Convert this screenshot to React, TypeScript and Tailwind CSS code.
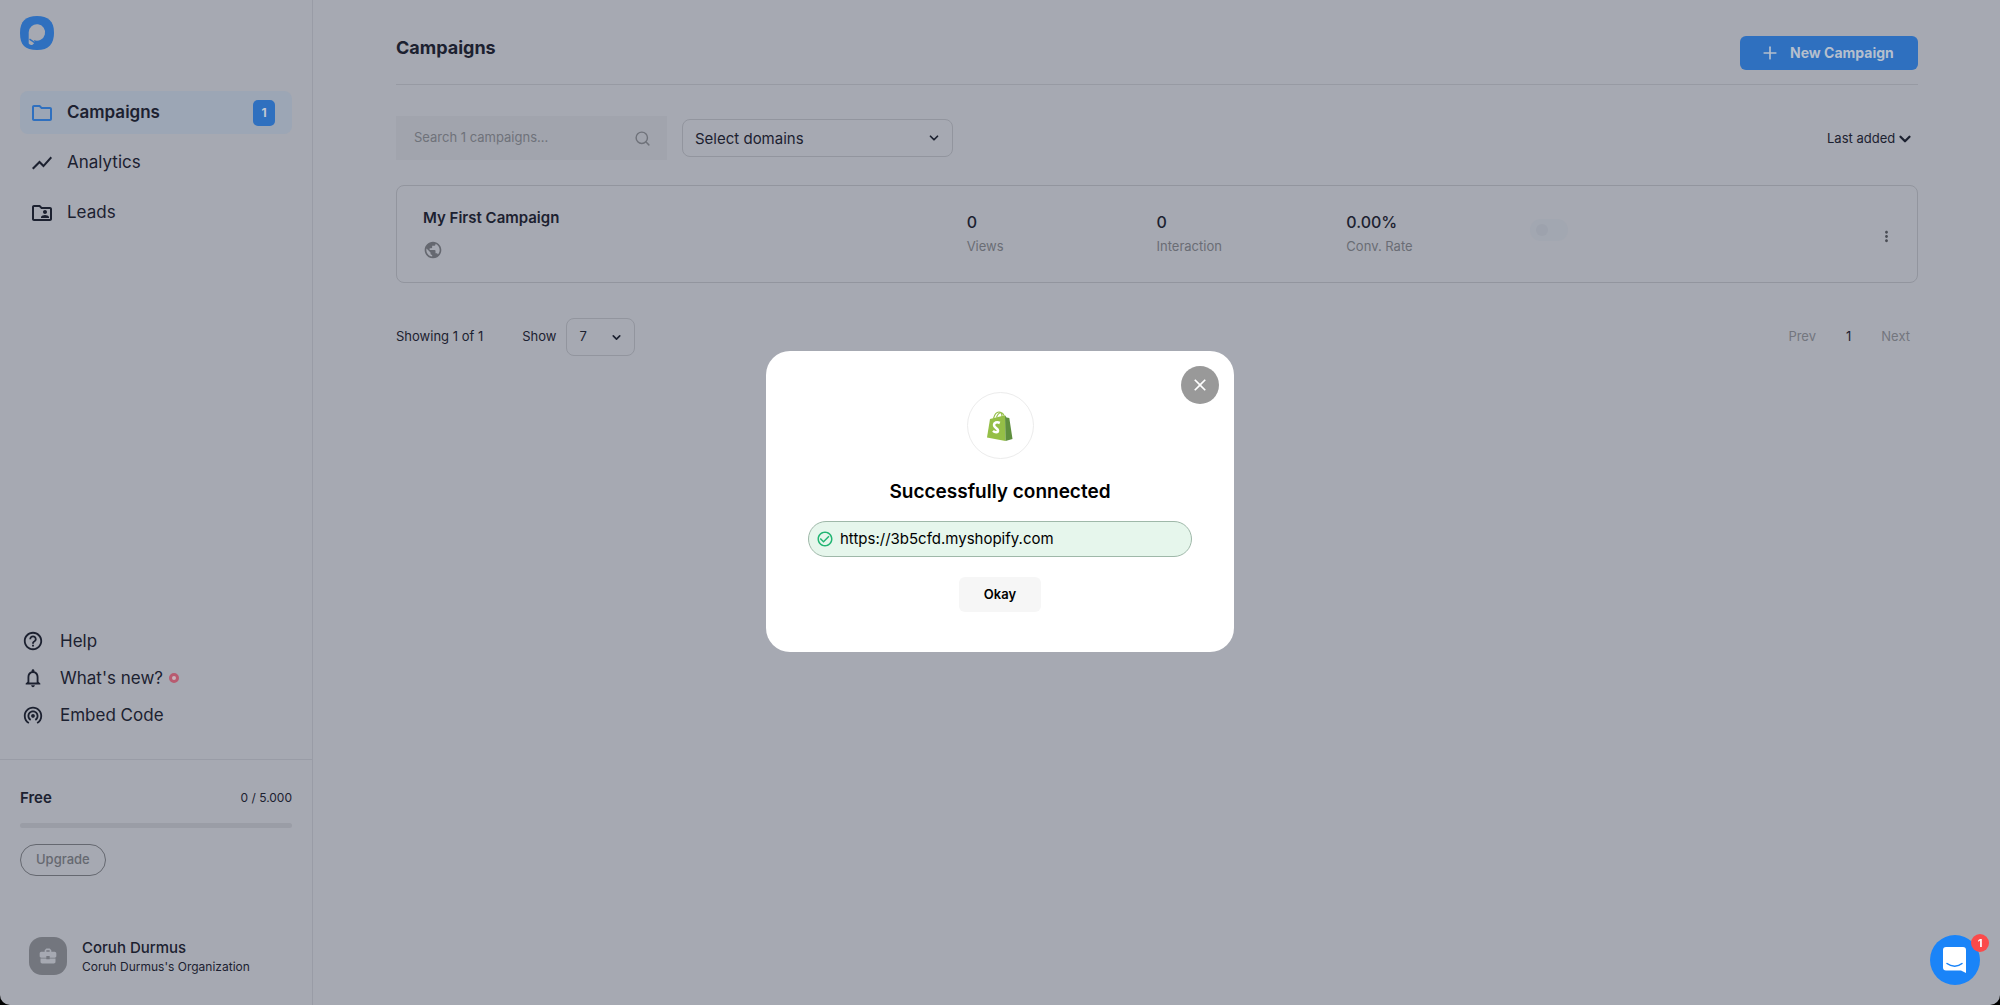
import { useState } from "react";
import type { ReactNode } from "react";
import {
  MdBusinessCenter,
  MdCheckCircleOutline,
  MdClose,
  MdHelpOutline,
  MdMoreVert,
  MdNotificationsNone,
  MdOutlineFolder,
  MdOutlineFolderShared,
  MdPublic,
  MdShowChart,
  MdWifiTethering,
} from "react-icons/md";
import { ChevronDown, Plus, Search } from "lucide-react";

const stats = [
  { label: "Views", value: "0" },
  { label: "Interaction", value: "0" },
  { label: "Conv. Rate", value: "0.00%" },
];

function Logo() {
  return (
    <svg viewBox="0 0 34 34" className="h-[34px] w-[34px]" aria-label="Home">
      <path
        d="M17 0c11 0 17 5 17 16.5S29 34 17 34 0 29 0 17 6 0 17 0z"
        fill="#2f70bf"
      />
      <path
        d="M8.700 16.300a8.200 8.200 0 1 1 5.300 7.800l.8 2.400-2.200 2.300q-2.600.9-3.900-1.200z"
        fill="#a6a9b2"
      />
      <path d="M9.500 23.200l5.500 3.600" stroke="#2f70bf" strokeWidth="1.400" />
    </svg>
  );
}

function ShopifyLogo() {
  return (
    <svg viewBox="0 0 26 30" className="h-[30px] w-[26px]" aria-hidden="true">
      <path d="M3 8l15-3.800L18.500 30 0 26.500z" fill="#95bf47" />
      <path d="M18 4.200l1.500 2.300 2.800.6L25.500 28l-7 2z" fill="#5e8e3e" />
      <path
        d="M6.500 7.500C7.500 3.500 9.500 1 12 1c2 0 3 2 3 4.500M9.500 6.500C10.500 3 12 2 14 1.500c1.800.2 2.500 1.700 3 3"
        fill="none"
        stroke="#95bf47"
        strokeWidth="1.200"
      />
      <path
        d="M12.800 12c-3-1.500-5.800-.3-5.800 2.100 0 3 4 3 4 5.400 0 2.200-3 2.200-5 .4"
        fill="none"
        stroke="#fff"
        strokeWidth="2.600"
      />
    </svg>
  );
}

function NavItem({ icon, label, active, count }: { icon: ReactNode; label: string; active?: boolean; count?: number }) {
  return (
    <a
      href="#"
      className={
        active
          ? "flex h-[43px] items-center rounded-lg bg-[#9ca6b5] pr-[17px] pl-2.5 text-[17px] font-semibold"
          : "flex h-[43px] items-center rounded-lg pr-[17px] pl-2.5 text-[17px]"
      }
    >
      {icon}
      <span className="ml-[13px] flex-1">{label}</span>
      {count && (
        <span className="flex h-[26px] w-[22px] items-center justify-center rounded-[5px] bg-[#2f70bf] text-xs font-bold text-[#c3c9d3]">
          {count}
        </span>
      )}
    </a>
  );
}

function HelpItem({ icon, label, dot }: { icon: ReactNode; label: string; dot?: boolean }) {
  return (
    <a href="#" className="flex items-center text-[17px] leading-6">
      {icon}
      <span className="ml-4">{label}</span>
      {dot && <span className="ml-1.5 h-2.5 w-2.5 rounded-full border-[3px] border-[#b85b70] bg-[#c9b3bb]" />}
    </a>
  );
}

function Sidebar() {
  return (
    <aside className="flex w-[313px] shrink-0 flex-col border-r border-[#999ca6]">
      <div className="px-5 pt-4">
        <Logo />
        <nav className="mt-[41px] flex flex-col gap-[7px]">
          <NavItem icon={<MdOutlineFolder size={24} color="#2f70bf" />} label="Campaigns" active count={1} />
          <NavItem icon={<MdShowChart size={24} />} label="Analytics" />
          <NavItem icon={<MdOutlineFolderShared size={24} />} label="Leads" />
        </nav>
      </div>

      <div className="mt-auto flex flex-col gap-[13px] px-[22px] pb-8">
        <HelpItem icon={<MdHelpOutline size={22} />} label="Help" />
        <HelpItem icon={<MdNotificationsNone size={22} />} label="What's new?" dot />
        <HelpItem icon={<MdWifiTethering size={22} />} label="Embed Code" />
      </div>

      <div className="border-t border-[#999ca6] px-5 pt-7 pb-[29px]">
        <div className="flex items-center justify-between">
          <span className="text-[15px] leading-5 font-semibold">Free</span>
          <span className="text-xs">0 / 5.000</span>
        </div>
        <div className="mt-[15px] h-[5px] rounded-sm bg-[#9a9da6]" />
        <button className="mt-4 h-8 rounded-full border border-[#656870] px-[15px] text-[13px] font-medium text-[#656870]">
          Upgrade
        </button>
        <div className="mt-[60px] flex items-center gap-[15px] pl-[9px]">
          <div className="flex h-[38px] w-[38px] items-center justify-center rounded-[13px] bg-[#73767e] text-[#a6a9b2]">
            <MdBusinessCenter size={20} />
          </div>
          <div className="pt-0.5">
            <p className="text-[15px] leading-5 font-medium">Coruh Durmus</p>
            <p className="text-xs leading-[18px]">Coruh Durmus's Organization</p>
          </div>
        </div>
      </div>
    </aside>
  );
}

function CampaignCard() {
  return (
    <article className="mt-[25px] grid h-[98px] grid-cols-[544fr_190fr_190fr_190fr_355fr] rounded-lg border border-[#92959e] px-[26px]">
      <div className="pt-[22px]">
        <h2 className="text-[15px] leading-5 font-semibold">My First Campaign</h2>
        <MdPublic size={20} color="#656870" className="mt-3" />
      </div>
      {stats.map((stat) => (
        <div key={stat.label} className="pt-6">
          <p className="text-base leading-6 font-medium">{stat.value}</p>
          <p className="mt-0.5 text-[13px] leading-5 text-[#6a6d75]">{stat.label}</p>
        </div>
      ))}
      <div className="flex items-center justify-between">
        <input
          type="checkbox"
          role="switch"
          aria-label="Campaign active"
          className="mb-2 -ml-1.5 flex h-[22px] w-[38px] appearance-none items-center rounded-full bg-[#a2a7b1] pl-1.5 before:h-3 before:w-3 before:rounded-full before:bg-[#9da2ad]"
        />
        <button aria-label="More" className="-mr-1 pt-1 text-[#4a4d55]">
          <MdMoreVert size={17} />
        </button>
      </div>
    </article>
  );
}

function Main() {
  return (
    <main className="min-w-0 flex-1 pt-7 pr-[82px] pl-[83px]">
      <header className="flex justify-between border-b border-[#979aa3] pb-[14px]">
        <h1 className="pt-1.5 text-lg leading-7 font-bold">Campaigns</h1>
        <button className="mt-2 flex h-[34px] w-[178px] items-center rounded-md bg-[#2f70bf] pl-5 text-sm font-bold text-[#b5bfcd]">
          <Plus size={20} />
          <span className="ml-2.5">New Campaign</span>
        </button>
      </header>

      <div className="mt-[31px] flex items-center">
        <label className="flex h-11 w-[271px] items-center bg-[#a1a4ad] pr-4 pl-[18px] text-[#6f727a]">
          <input
            type="text"
            aria-label="Search campaigns"
            placeholder="Search 1 campaigns..."
            className="min-w-0 flex-1 bg-transparent text-[13px] outline-none placeholder:text-[#6f727a]"
          />
          <Search size={17} />
        </label>
        <div className="relative ml-[15px]">
          <select aria-label="Domains" className="h-[38px] w-[271px] appearance-none rounded-lg border border-[#92959e] px-3 pt-0.5 text-[15px]">
            <option>Select domains</option>
          </select>
          <ChevronDown size={14} strokeWidth={3} className="pointer-events-none absolute top-3 right-3" />
        </div>
        <div className="relative ml-auto flex">
          <select aria-label="Sort by" className="w-[91px] appearance-none text-[13px] leading-5">
            <option>Last added</option>
          </select>
          <ChevronDown size={18} strokeWidth={3} className="pointer-events-none absolute top-0.5 right-1" />
        </div>
      </div>

      <CampaignCard />

      <footer className="mt-[35px] flex items-center text-[13px]">
        <span>Showing 1 of 1</span>
        <label htmlFor="page-size" className="ml-[39px]">Show</label>
        <div className="relative ml-2.5">
          <select id="page-size" className="h-[38px] w-[69px] appearance-none rounded-lg border border-[#92959e] px-3">
            <option>7</option>
          </select>
          <ChevronDown size={13} strokeWidth={3} className="pointer-events-none absolute top-[13px] right-3" />
        </div>
        <nav className="mr-2 ml-auto flex text-[#73767e]">
          <button>Prev</button>
          <button className="mx-[30px] text-[#1c2130]">1</button>
          <button>Next</button>
        </nav>
      </footer>
    </main>
  );
}

function ConnectedModal({ onClose }: { onClose: () => void }) {
  return (
    <div className="fixed inset-0 flex items-center justify-center pb-0.5">
      <div role="dialog" aria-modal="true" className="relative flex w-[468px] flex-col items-center rounded-3xl bg-white px-[42px] pt-[41px] pb-10 text-black">
        <button
          aria-label="Close"
          onClick={onClose}
          className="absolute top-[15px] right-[15px] flex h-[38px] w-[38px] items-center justify-center rounded-full bg-[#999999] text-white"
        >
          <MdClose size={20} />
        </button>
        <div className="flex h-[67px] w-[67px] items-center justify-center rounded-full border border-[#ececec]">
          <ShopifyLogo />
        </div>
        <h2 className="mt-[19px] text-[19px] leading-7 font-semibold">Successfully connected</h2>
        <div className="mt-[15px] flex h-9 w-full items-center rounded-full border border-[#9fb8a9] bg-[#e6f6ec] pl-[7px] text-[15px]">
          <MdCheckCircleOutline size={18} color="#22b573" />
          <span className="ml-1.5">https://3b5cfd.myshopify.com</span>
        </div>
        <button onClick={onClose} className="mt-5 h-[35px] w-[82px] rounded-md bg-[#f6f6f6] text-[13px] font-semibold">
          Okay
        </button>
      </div>
    </div>
  );
}

function ChatLauncher() {
  return (
    <button aria-label="Open chat" className="fixed right-5 bottom-5 flex h-[50px] w-[50px] items-center justify-center rounded-full bg-[#1a84f8]">
      <svg viewBox="0 0 24 26" className="h-[26px] w-[24px]">
        <path d="M3 0h17a3 3 0 0 1 3 3v23l-5-2.500H3a3 3 0 0 1-3-3V3a3 3 0 0 1 3-3z" fill="#fff" />
        <path d="M4 16.500c4.500 3.500 11 3.500 15 0" fill="none" stroke="#1a84f8" strokeWidth="1.500" strokeLinecap="round" />
      </svg>
      <span className="absolute -top-px -right-[9px] flex h-[18px] w-[18px] items-center justify-center rounded-full bg-[#fb4a4a] text-[11px] font-bold text-white">
        1
      </span>
    </button>
  );
}

export default function App() {
  const [open, setOpen] = useState(true);

  return (
    <div className="min-h-screen bg-black font-[Inter,sans-serif] text-[#1c2130]">
      <div className="flex min-h-screen rounded-b-[10px] bg-[#a6a9b2]">
        <Sidebar />
        <Main />
      </div>
      {open && <ConnectedModal onClose={() => setOpen(false)} />}
      <ChatLauncher />
    </div>
  );
}
